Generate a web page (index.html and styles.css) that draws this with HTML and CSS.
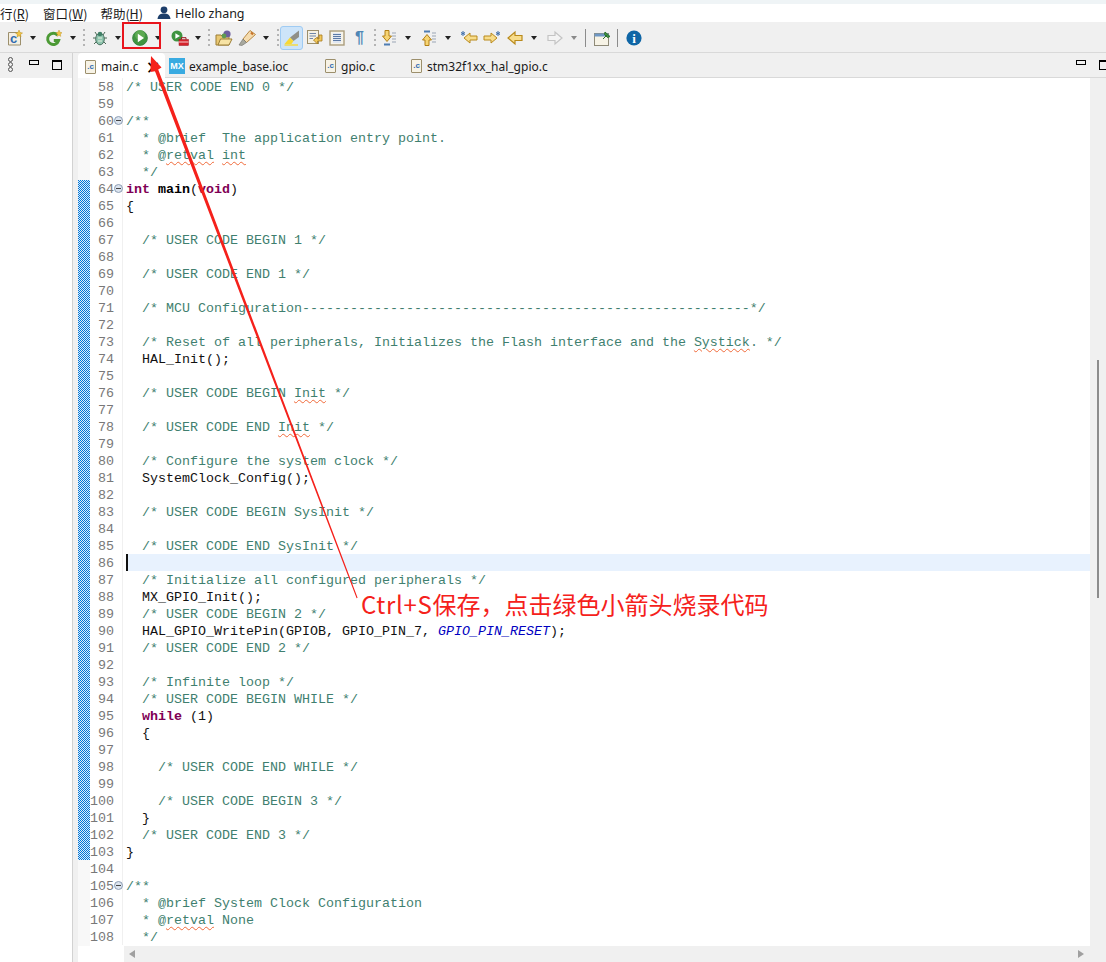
FILE: index.html
```html
<!DOCTYPE html>
<html>
    <head>
        <meta charset="utf-8">
        <title>main.c</title>
        <link rel="stylesheet" href="styles.css">
    </head>
    <body>
        <div class="top-strip"></div>
        <div class="menubar">
            <span class="menu first">行(<u>R</u>)</span>
            <span class="menu">窗口(<u>W</u>)</span>
            <span class="menu">帮助(<u>H</u>)</span>
            <svg class="user-icon" viewBox="0 0 14 14"><circle cx="7" cy="3.8" r="3.4" fill="#1d3f6b"/><path d="M0.5 13 C1 8.5 4 7.5 7 7.5 C10 7.5 13 8.5 13.5 13 Z" fill="#1d3f6b"/></svg>
            <span class="hello">Hello zhang</span>
        </div>
        <div class="toolbar">
            <svg class="icon" viewBox="0 0 16 16"><path d="M1.5 2.5H10L13.5 5V15H1.5Z" fill="#f4efe2" stroke="#9c8f6c"/><text x="3" y="13" class="glyph-c">c</text><path d="M12 0L13 2.5 15.5 3 13.5 4.5 14 7 12 5.7 10 7 10.5 4.5 8.5 3 11 2.5Z" fill="#f3c544" stroke="#b98d1d" stroke-width=".5"/></svg>
            <i class="arrow"></i>
            <svg class="icon" viewBox="0 0 16 16"><path d="M11.5 5.2A5.6 5.6 0 1 0 12.6 10.5H7.8" fill="none" stroke="#4c9a35" stroke-width="3"/><path d="M13 0L14 2.3 16 2.7 14.4 4.2 14.8 6.4 13 5.3 11.2 6.4 11.6 4.2 10 2.7 12 2.3Z" fill="#f3c544" stroke="#b98d1d" stroke-width=".4"/></svg>
            <i class="arrow"></i>
            <i class="dots"></i>
            <svg class="icon" viewBox="0 0 16 16"><path d="M3 2L5 5M13 2L11 5M1 8H4M15 8H12M2 14L5 11M14 14L11 11" stroke="#4d6b57" fill="none"/><ellipse cx="8" cy="9" rx="4.3" ry="5.8" fill="#8fc4ae" stroke="#47705f"/><circle cx="8" cy="4" r="2.3" fill="#3f7f66"/><path d="M6 8H10M6 11H10" stroke="#e3f0dc"/></svg>
            <i class="arrow"></i>
            <svg class="icon" viewBox="0 0 16 16"><circle cx="8" cy="8" r="7.4" fill="#3f9440" stroke="#2e7d38" stroke-width=".8"/><circle cx="8" cy="5" r="5" fill="#6fb95f" opacity=".6"/><path d="M5.8 3.8L12 8 5.8 12.2Z" fill="#fff"/></svg>
            <i class="arrow"></i>
            <svg class="icon wide" viewBox="0 0 18 16"><circle cx="6" cy="6" r="5.5" fill="#3f9440"/><path d="M4.4 3.2L9 6 4.4 8.8Z" fill="#fff"/><rect x="8" y="9.5" width="9.5" height="6" fill="#d5232c" stroke="#97151c" stroke-width=".5"/><path d="M10.5 9.5V7.7H15V9.5" fill="none" stroke="#97151c"/><path d="M8 12H17.5" stroke="#f8d0d0"/></svg>
            <i class="arrow"></i>
            <i class="dots"></i>
            <svg class="icon wide" viewBox="0 0 18 16"><path d="M1 5H6L7.5 6.5H14V15H1Z" fill="#e9c873" stroke="#9b7d35"/><path d="M3 15L5.5 9H17L14 15Z" fill="#f7e3a4" stroke="#9b7d35"/><circle cx="12" cy="4" r="3.6" fill="#6d5f9e"/><circle cx="9" cy="6" r="2.4" fill="#5f9a50"/></svg>
            <svg class="icon wide" viewBox="0 0 18 16"><path d="M12 0.5L17.5 4.5 8.5 12.5 5 9Z" fill="#f5dcae" stroke="#b98a45"/><path d="M13 2.5L15 4.5" stroke="#c9742c" stroke-width="2.2"/><path d="M5 9L8.5 12.5 4 15.5 1 15Z" fill="#a8a89e" stroke="#6e6e68" stroke-width=".6"/></svg>
            <i class="arrow"></i>
            <i class="dots"></i>
            <span class="toggled"><svg class="icon" viewBox="0 0 16 16"><path d="M15 0.5V7L9.5 11 6 7.5Z" fill="#8f8f88"/><path d="M6 7.5L9.5 11 7.5 14H0.5Z" fill="#f7d838"/><path d="M0.5 15H14" stroke="#f7d838" stroke-width="1.4"/></svg></span>
            <svg class="icon" viewBox="0 0 16 16"><rect x=".5" y=".5" width="11" height="13" fill="#f5f1e4" stroke="#9c8f6c"/><path d="M2.5 3.5H9M2.5 6H9M2.5 8.5H6" stroke="#6f86a8"/><path d="M12 5H15V11H10.5V14L6.5 10 10.5 7V9H12Z" fill="#f2c95a" stroke="#a77a1d" stroke-width=".8"/></svg>
            <svg class="icon" viewBox="0 0 16 16"><rect x="1" y="1" width="14" height="14" fill="#f6f3ea" stroke="#ab9d7c" stroke-width="1.4"/><rect x="4" y="3" width="8" height="10" fill="#dfe6f1"/><path d="M4 4.5H12M4 6.5H12M4 8.5H12M4 10.5H12" stroke="#5c7aa6"/></svg>
            <span class="pilcrow">¶</span>
            <i class="dots"></i>
            <svg class="icon" viewBox="0 0 16 16"><path d="M4 0.5H8V6H10.5L6 11.5 1.5 6H4Z" fill="#f6d473" stroke="#b27f14"/><path d="M11 3H15M11 6H15M11 9H15M11 12H15" stroke="#9aa5b5"/><path d="M3 14.5H9" stroke="#4f7db3" stroke-width="2"/></svg>
            <i class="arrow"></i>
            <svg class="icon" viewBox="0 0 16 16"><path d="M4 15.5H8V10H10.5L6 4.5 1.5 10H4Z" fill="#f6d473" stroke="#b27f14"/><path d="M11 3H15M11 6H15M11 9H15M11 12H15" stroke="#9aa5b5"/><path d="M3 1.5H9" stroke="#4f7db3" stroke-width="2"/></svg>
            <i class="arrow"></i>
            <svg class="icon wide" viewBox="0 0 18 16"><path d="M17 6H10V3L4 8 10 13V10H17Z" fill="#f8dd8b" stroke="#b98a1c"/><path d="M3 1V6M1 2.5L5 4.5M5 2.5L1 4.5" stroke="#3d6ca8"/></svg>
            <svg class="icon wide" viewBox="0 0 18 16"><path d="M1 6H8V3L14 8 8 13V10H1Z" fill="#f8dd8b" stroke="#b98a1c"/><path d="M15 1V6M13 2.5L17 4.5M17 2.5L13 4.5" stroke="#3d6ca8"/></svg>
            <svg class="icon" viewBox="0 0 16 16"><path d="M15 5.5H8V2L1 8 8 14V10.5H15Z" fill="#f8dd8b" stroke="#b98a1c" stroke-width="1.2"/></svg>
            <i class="arrow"></i>
            <svg class="icon" viewBox="0 0 16 16"><path d="M1 5.5H8V2L15 8 8 14V10.5H1Z" fill="#f4f4f4" stroke="#c4c4c4" stroke-width="1.2"/></svg>
            <i class="arrow off"></i>
            <i class="bar"></i>
            <svg class="icon wide" viewBox="0 0 18 16"><rect x=".5" y="3.5" width="14" height="12" fill="#f7f3e6" stroke="#8f8a78"/><rect x=".5" y="3.5" width="14" height="3" fill="#6f97c4"/><path d="M9 9L13 5M11 2L16 6.5 13.5 7.5 10.5 4.5Z" fill="#3f9440" stroke="#2d7030"/></svg>
            <i class="bar"></i>
            <svg class="icon" viewBox="0 0 16 16"><circle cx="8" cy="8" r="7.6" fill="#0f66a6"/><text x="8" y="13" class="glyph-i">i</text></svg>
        </div>
        <div class="workbench">
            <div class="side">
                <div class="side-head">
                    <span class="rings"><i></i><i></i><i></i></span>
                    <i class="min-btn"></i>
                    <i class="max-btn"></i>
                </div>
            </div>
            <div class="strip"></div>
            <div class="editor">
                <div class="tabs">
                    <div class="tab active">
                        <span class="file-icon">.c</span>
                        <span>main.c</span>
                        <span class="close">×</span>
                    </div>
                    <div class="tab ioc">
                        <span class="mx-icon">MX</span>
                        <span>example_base.ioc</span>
                    </div>
                    <div class="tab gpio">
                        <span class="file-icon">.c</span>
                        <span>gpio.c</span>
                    </div>
                    <div class="tab">
                        <span class="file-icon">.c</span>
                        <span>stm32f1xx_hal_gpio.c</span>
                    </div>
                    <div class="tab-btns">
                        <i class="min-btn"></i>
                        <i class="max-btn"></i>
                    </div>
                </div>
                <div class="body">
                    <div class="text-area">
                        <div class="overview">
                            <svg class="changed"><pattern id="dither" width="2" height="2" patternUnits="userSpaceOnUse"><rect width="2" height="2" fill="#dceefb"/><rect width="1" height="1" fill="#0073d6"/><rect x="1" y="1" width="1" height="1" fill="#0073d6"/></pattern><rect width="12" height="680" fill="url(#dither)"/></svg>
                        </div>
                        <div class="lines">
                            <div class="row"><span class="num">58</span><span class="fold"></span><code><s>/* USER CODE END 0 */</s></code></div>
                            <div class="row"><span class="num">59</span><span class="fold"></span><code></code></div>
                            <div class="row"><span class="num">60</span><span class="fold open"></span><code><s>/**</s></code></div>
                            <div class="row"><span class="num">61</span><span class="fold"></span><code><s>  * @brief  The application entry point.</s></code></div>
                            <div class="row"><span class="num">62</span><span class="fold"></span><code><s>  * @<em>retval</em> <em>int</em></s></code></div>
                            <div class="row"><span class="num">63</span><span class="fold"></span><code><s>  */</s></code></div>
                            <div class="row"><span class="num">64</span><span class="fold open"></span><code><b>int</b> <strong>main</strong>(<b>void</b>)</code></div>
                            <div class="row"><span class="num">65</span><span class="fold"></span><code>{</code></div>
                            <div class="row"><span class="num">66</span><span class="fold"></span><code></code></div>
                            <div class="row"><span class="num">67</span><span class="fold"></span><code>  <s>/* USER CODE BEGIN 1 */</s></code></div>
                            <div class="row"><span class="num">68</span><span class="fold"></span><code></code></div>
                            <div class="row"><span class="num">69</span><span class="fold"></span><code>  <s>/* USER CODE END 1 */</s></code></div>
                            <div class="row"><span class="num">70</span><span class="fold"></span><code></code></div>
                            <div class="row"><span class="num">71</span><span class="fold"></span><code>  <s>/* MCU Configuration--------------------------------------------------------*/</s></code></div>
                            <div class="row"><span class="num">72</span><span class="fold"></span><code></code></div>
                            <div class="row"><span class="num">73</span><span class="fold"></span><code>  <s>/* Reset of all peripherals, Initializes the Flash interface and the <em>Systick</em>. */</s></code></div>
                            <div class="row"><span class="num">74</span><span class="fold"></span><code>  HAL_Init();</code></div>
                            <div class="row"><span class="num">75</span><span class="fold"></span><code></code></div>
                            <div class="row"><span class="num">76</span><span class="fold"></span><code>  <s>/* USER CODE BEGIN <em>Init</em> */</s></code></div>
                            <div class="row"><span class="num">77</span><span class="fold"></span><code></code></div>
                            <div class="row"><span class="num">78</span><span class="fold"></span><code>  <s>/* USER CODE END <em>Init</em> */</s></code></div>
                            <div class="row"><span class="num">79</span><span class="fold"></span><code></code></div>
                            <div class="row"><span class="num">80</span><span class="fold"></span><code>  <s>/* Configure the system clock */</s></code></div>
                            <div class="row"><span class="num">81</span><span class="fold"></span><code>  SystemClock_Config();</code></div>
                            <div class="row"><span class="num">82</span><span class="fold"></span><code></code></div>
                            <div class="row"><span class="num">83</span><span class="fold"></span><code>  <s>/* USER CODE BEGIN SysInit */</s></code></div>
                            <div class="row"><span class="num">84</span><span class="fold"></span><code></code></div>
                            <div class="row"><span class="num">85</span><span class="fold"></span><code>  <s>/* USER CODE END SysInit */</s></code></div>
                            <div class="row"><span class="num">86</span><span class="fold"></span><code class="current"></code></div>
                            <div class="row"><span class="num">87</span><span class="fold"></span><code>  <s>/* Initialize all configured peripherals */</s></code></div>
                            <div class="row"><span class="num">88</span><span class="fold"></span><code>  MX_GPIO_Init();</code></div>
                            <div class="row"><span class="num">89</span><span class="fold"></span><code>  <s>/* USER CODE BEGIN 2 */</s></code></div>
                            <div class="row"><span class="num">90</span><span class="fold"></span><code>  HAL_GPIO_WritePin(GPIOB, GPIO_PIN_7, <dfn>GPIO_PIN_RESET</dfn>);</code></div>
                            <div class="row"><span class="num">91</span><span class="fold"></span><code>  <s>/* USER CODE END 2 */</s></code></div>
                            <div class="row"><span class="num">92</span><span class="fold"></span><code></code></div>
                            <div class="row"><span class="num">93</span><span class="fold"></span><code>  <s>/* Infinite loop */</s></code></div>
                            <div class="row"><span class="num">94</span><span class="fold"></span><code>  <s>/* USER CODE BEGIN WHILE */</s></code></div>
                            <div class="row"><span class="num">95</span><span class="fold"></span><code>  <b>while</b> (1)</code></div>
                            <div class="row"><span class="num">96</span><span class="fold"></span><code>  {</code></div>
                            <div class="row"><span class="num">97</span><span class="fold"></span><code></code></div>
                            <div class="row"><span class="num">98</span><span class="fold"></span><code>    <s>/* USER CODE END WHILE */</s></code></div>
                            <div class="row"><span class="num">99</span><span class="fold"></span><code></code></div>
                            <div class="row"><span class="num">100</span><span class="fold"></span><code>    <s>/* USER CODE BEGIN 3 */</s></code></div>
                            <div class="row"><span class="num">101</span><span class="fold"></span><code>  }</code></div>
                            <div class="row"><span class="num">102</span><span class="fold"></span><code>  <s>/* USER CODE END 3 */</s></code></div>
                            <div class="row"><span class="num">103</span><span class="fold"></span><code>}</code></div>
                            <div class="row"><span class="num">104</span><span class="fold"></span><code></code></div>
                            <div class="row"><span class="num">105</span><span class="fold open"></span><code><s>/**</s></code></div>
                            <div class="row"><span class="num">106</span><span class="fold"></span><code><s>  * @brief System Clock Configuration</s></code></div>
                            <div class="row"><span class="num">107</span><span class="fold"></span><code><s>  * @<em>retval</em> None</s></code></div>
                            <div class="row"><span class="num">108</span><span class="fold"></span><code><s>  */</s></code></div>
                        </div>
                    </div>
                    <div class="vscroll"><div class="thumb"></div></div>
                    <div class="hscroll"><i class="left"></i><i class="right"></i></div>
                </div>
            </div>
        </div>

        <!-- annotation drawn on top of the screenshot -->
        <div class="red-box"></div>
        <svg class="pointer" viewBox="0 0 1106 962"><path d="M151 56L161.5 67.5 158.2 69.6 357.6 597.8 356.6 598.2 155 71.2 150.4 72Z" fill="#f5211b"/></svg>
        <div class="note"><span class="note-latin">Ctrl+S</span>保存，点击绿色小箭头烧录代码</div>
    </body>
</html>
```

FILE: styles.css
```css
html,
body {
    margin: 0;
    height: 962px;
    overflow: hidden;
    background-color: white;
    font-family: "Noto Sans", "Noto Sans CJK SC", sans-serif;
    color: #1a1a1a;
}
.top-strip {
    height: 4px;
    background-color: #eff4f6;
}
.menubar {
    display: flex;
    align-items: center;
    height: 18px;
    font-size: 12.5px;
    white-space: nowrap;
}
.menu {
    margin-right: 13px;
    font-family: "Noto Sans CJK SC", sans-serif;
}
.menu.first {
    margin-right: 14px;
}
.user-icon {
    width: 14px;
    height: 14px;
    margin: 0 4px 0 1px;
}
.hello {
    font-size: 12.5px;
}
.toolbar {
    box-sizing: border-box;
    display: grid;
    grid-template-columns: 23px 16px 24px 13px 9px 23px 17px 23px 16px 24px 13px 7px 23px 25px 14px 3px 27px 22px 23px 22px 7px 24px 16px 24px 15px 23px 24px 24px 16px 24px 14px 9px 23px 9px 20px;
    align-items: center;
    justify-items: start;
    height: 31px;
    padding-top: 1px;
    padding-left: 7px;
    background-color: #f0f0f0;
    border-bottom: 1px solid #d9d9d9;
}
.icon {
    width: 16px;
    height: 16px;
    overflow: visible;
}
.icon.wide {
    width: 18px;
}
.glyph-c {
    font-family: "Liberation Sans", sans-serif;
    font-size: 13px;
    font-weight: bold;
    fill: #2f6bb0;
}
.glyph-i {
    font-family: "Liberation Serif", serif;
    font-size: 13px;
    font-weight: bold;
    fill: white;
    text-anchor: middle;
}
.arrow {
    width: 0;
    height: 0;
    border-style: solid;
    border-width: 4px 3.5px 0;
    border-color: #222 transparent transparent;
}
.arrow.off {
    border-top-color: #8a8a8a;
}
.dots {
    width: 2px;
    height: 17px;
    background: repeating-linear-gradient(#b4b4b4 0 2px, transparent 2px 5px);
}
.bar {
    width: 1px;
    height: 18px;
    background-color: #8c8c8c;
}
.toggled {
    display: flex;
    align-items: center;
    justify-content: center;
    box-sizing: border-box;
    width: 23px;
    height: 24px;
    background-color: #cde4f9;
    border: 1px solid #9fcbf3;
    border-radius: 3px;
}
.pilcrow {
    margin-left: 3px;
    font-family: "Liberation Sans", sans-serif;
    font-size: 16px;
    font-weight: bold;
    color: #4f86b5;
}
.workbench {
    display: flex;
    height: 909px;
}
.side {
    width: 72px;
}
.side-head {
    display: flex;
    align-items: flex-start;
    box-sizing: border-box;
    height: 25px;
    padding: 7px 0 0 8px;
    background-color: #f0f0f0;
}
.rings {
    display: flex;
    flex-direction: column;
    margin: -3px 16px 0 0;
}
.rings i {
    width: 3px;
    height: 3px;
    border: 1px solid #555;
    border-radius: 50%;
}
.min-btn {
    box-sizing: border-box;
    width: 10px;
    height: 5px;
    border: 1px solid black;
}
.max-btn {
    box-sizing: border-box;
    width: 10px;
    height: 10px;
    margin-left: 13px;
    border: 1px solid black;
    border-top-width: 2px;
}
.strip {
    box-sizing: border-box;
    width: 6px;
    background-color: #f0f0f0;
    border-left: 1px solid #d2d2d2;
}
.editor {
    flex: 1;
    display: flex;
    flex-direction: column;
    min-width: 0;
}
.tabs {
    display: flex;
    box-sizing: border-box;
    height: 25px;
    background-color: #f0f0f0;
    border-bottom: 1px solid #d9d9d9;
    font-size: 12px;
}
.tab {
    display: flex;
    align-items: center;
    gap: 5px;
    padding-top: 2px;
    padding-left: 4px;
    white-space: nowrap;
}
.tab.active {
    position: relative;
    width: 87px;
    box-sizing: border-box;
    padding-left: 7px;
    height: 25px;
    background-color: white;
    border-radius: 4px 4px 0 0;
}
.tab.ioc {
    width: 156px;
    box-sizing: border-box;
}
.tab.gpio {
    width: 86px;
    box-sizing: border-box;
}
.close {
    margin-left: 3px;
    font-size: 23px;
    line-height: 18px;
    color: black;
}
.file-icon {
    box-sizing: border-box;
    width: 11px;
    height: 14px;
    background-color: #f7f3e6;
    border: 1px solid #9c8f6c;
    border-radius: 1px;
    font-family: "Liberation Sans", sans-serif;
    font-size: 8px;
    font-weight: bold;
    line-height: 12px;
    text-align: center;
    color: #2f6bb0;
}
.mx-icon {
    width: 16px;
    height: 16px;
    margin-right: -1px;
    background-color: #39abe1;
    font-family: "Liberation Sans", sans-serif;
    font-size: 9px;
    font-weight: bold;
    line-height: 16px;
    text-align: center;
    color: white;
}
.tab-btns {
    display: flex;
    align-items: flex-start;
    margin-left: auto;
    margin-right: -3px;
    padding-top: 7px;
}
.body {
    display: grid;
    grid-template-columns: 1fr 16px;
    grid-template-rows: 868px 16px;
}
.text-area {
    display: flex;
    min-width: 0;
}
.overview {
    flex: none;
    width: 12px;
    padding-top: 102px;
    background-color: #f8f8f8;
}
.changed {
    display: block;
    width: 12px;
    height: 680px;
    shape-rendering: crispEdges;
}
.lines {
    flex: 1;
    min-width: 0;
    font-family: "Liberation Mono", monospace;
    font-size: 13.33px;
    line-height: 19px;
}
.row {
    display: flex;
    height: 17px;
}
.num {
    width: 24px;
    text-align: right;
    color: #787878;
}
.fold {
    position: relative;
    box-sizing: border-box;
    width: 9px;
    border-right: 1px solid #f0f0f0;
}
.fold.open::before {
    content: "";
    position: absolute;
    top: 4px;
    left: 0;
    width: 7px;
    height: 7px;
    background-color: #dbe4ef;
    border: 1px solid #8d9db3;
    border-radius: 50%;
}
.fold.open::after {
    content: "";
    position: absolute;
    top: 8px;
    left: 2px;
    width: 5px;
    height: 1px;
    background-color: #444;
}
code {
    flex: 1;
    padding-left: 3px;
    font-family: inherit;
    white-space: pre;
    color: #111;
}
code.current {
    margin-left: 3px;
    padding-left: 0;
    background-color: #e8f2fe;
    border-left: 2px solid #111;
}
code s {
    text-decoration: none;
    color: #3f7f6f;
}
code b {
    color: #7f0055;
}
code strong {
    color: black;
}
code em {
    font-style: normal;
    text-decoration: underline wavy #f06a3a 1px;
    text-underline-offset: 2px;
}
code dfn {
    font-style: italic;
    color: #0000c0;
}
.vscroll {
    background-color: #f0f0f0;
}
.thumb {
    width: 2px;
    height: 238px;
    margin: 282px 0 0 7px;
    background-color: #8c8c8c;
}
.hscroll {
    grid-column: 1 / 3;
    display: flex;
    justify-content: space-between;
    align-items: center;
    margin-left: 46px;
    padding: 0 22px 0 5px;
    background-color: #f0f0f0;
}
.hscroll .left {
    border-style: solid;
    border-width: 4px 6px 4px 0;
    border-color: transparent #a0a0a0 transparent transparent;
}
.hscroll .right {
    border-style: solid;
    border-width: 4px 0 4px 6px;
    border-color: transparent transparent transparent #a0a0a0;
}
.red-box {
    position: absolute;
    top: 22px;
    left: 122px;
    box-sizing: border-box;
    width: 39px;
    height: 27px;
    border: 2px solid #e8141c;
}
.pointer {
    position: absolute;
    top: 0;
    left: 0;
    width: 1106px;
    height: 962px;
    pointer-events: none;
}
.note {
    position: absolute;
    top: 586px;
    left: 361px;
    font-family: "Noto Sans CJK SC", sans-serif;
    font-size: 24px;
    line-height: 35px;
    white-space: nowrap;
    color: #f5211b;
}
.note-latin {
    letter-spacing: 0.7px;
}
```
